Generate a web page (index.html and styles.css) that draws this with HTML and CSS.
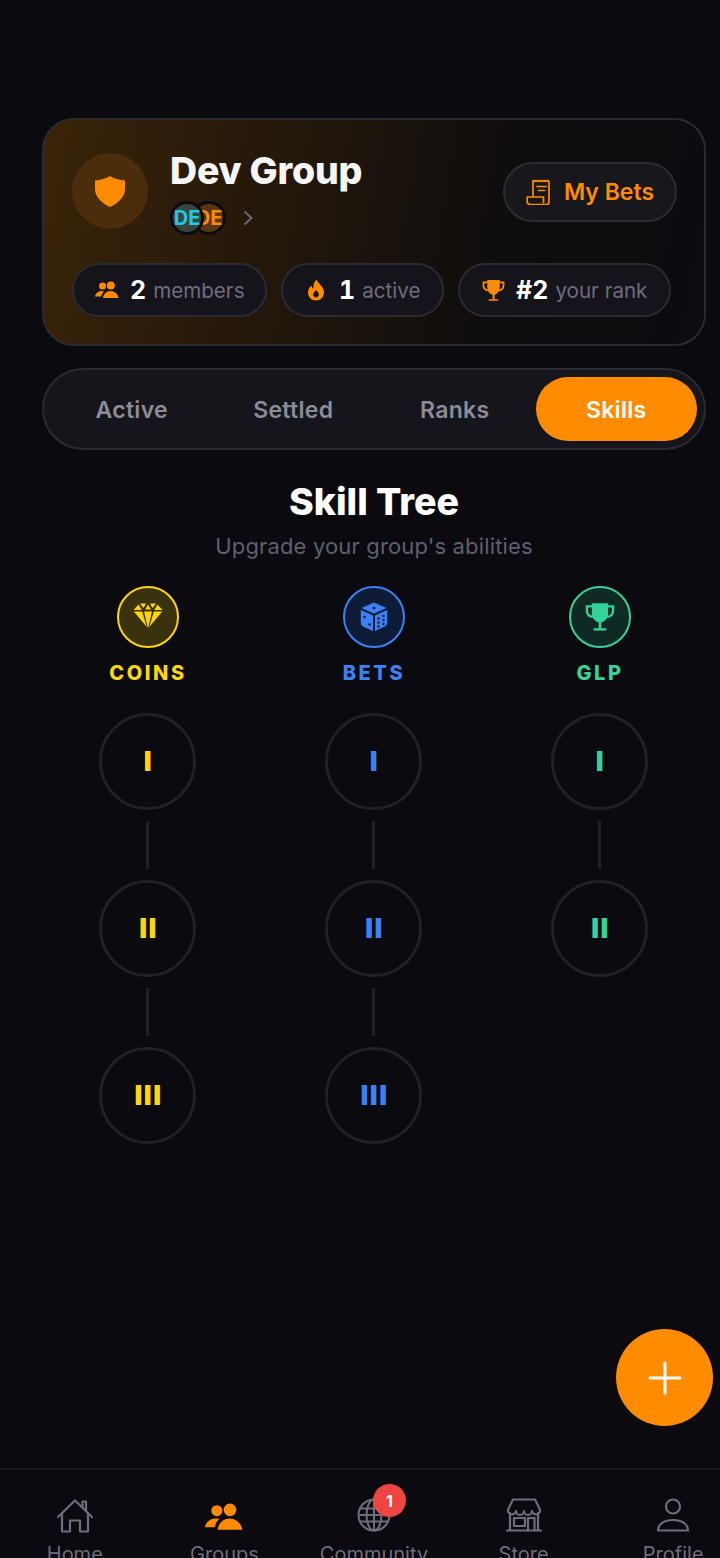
FILE: index.html
```html
<!DOCTYPE html>
<html lang="en">
<head>
  <meta charset="UTF-8" />
  <meta name="viewport" content="width=device-width, initial-scale=1.0"/>
  <title>Dev Group - Skills</title>
  <link rel="stylesheet" href="styles.css">
</head>
<body>
  <div class="screen">
    <div class="main-content">

      <div class="group-card">
        <div class="group-top">
          <div class="group-badge">
            <svg width="32" height="32" viewBox="0 0 32 32"><path d="M16 1C20 3.500 25 5 31 5.500V14C31 22 24 28 16 32 8 28 1 22 1 14V5.500C7 5 12 3.500 16 1z" fill="#ff8c00"/></svg>
          </div>
          <div class="group-info">
            <h1>Dev Group</h1>
            <div class="member-row">
              <div class="avatars">
                <span class="avatar avatar-orange">DE</span>
                <span class="avatar avatar-cyan">DE</span>
              </div>
              <svg class="chevron" width="12" height="16" viewBox="0 0 12 16"><path d="M2.500 1.500 9.500 8l-7 6.500" fill="none" stroke="#6b6478" stroke-width="2"/></svg>
            </div>
          </div>
          <button class="bets-btn">
            <svg width="28" height="26" viewBox="0 0 28 26" fill="none" stroke="#ff8c00" stroke-width="1.700" stroke-linejoin="round" stroke-linecap="round"><path d="M7 18V1.500l1.500 1 1.500-1 1.500 1 1.500-1 1.500 1 1.500-1 1.500 1 1.500-1 1.500 1 1.500-1 1 1v20.500a2.500 2.500 0 0 1-2.500 2.500H4a3 3 0 0 1-2.800-3.500V18H17.500v5.500"/><path d="M11 7.500h9M12.500 11.500h6"/></svg>
            My Bets
          </button>
        </div>
        <div class="stat-row">
          <div class="stat-pill">
            <div class="stat-icon"><svg width="24" height="18" viewBox="0 0 24 18" fill="#ff8c00"><use href="#people"/></svg></div>
            <b>2</b><span>members</span>
          </div>
          <div class="stat-pill">
            <div class="stat-icon"><svg width="18" height="22" viewBox="0 0 18 22"><path d="M9.500 0.500c.8 3.500 7.500 6.500 7.500 13 0 4.500-3.500 8-8 8s-8-3.500-8-8c0-3 1.500-5.500 3.500-7 .2 1.700.8 2.700 2 3.300C6 6.500 7 3 9.500.500z" fill="#ff8c00"/><path d="M9 11c1.600 1.600 2.800 3 2.800 4.600 0 1.600-1.200 2.900-2.800 2.900s-2.800-1.300-2.800-2.900C6.200 14 7.400 12.600 9 11z" fill="#17161c"/></svg></div>
            <b>1</b><span>active</span>
          </div>
          <div class="stat-pill">
            <div class="stat-icon"><svg class="orange" width="23" height="23" viewBox="0 0 24 24" fill="currentColor"><use href="#trophy"/></svg></div>
            <b>#2</b><span>your rank</span>
          </div>
        </div>
      </div>

      <div class="tabs">
        <div class="tab">Active</div>
        <div class="tab">Settled</div>
        <div class="tab">Ranks</div>
        <div class="tab tab-on">Skills</div>
      </div>

      <h2>Skill Tree</h2>
      <p class="subtitle">Upgrade your group's abilities</p>

      <div class="tree">
        <div class="branch coins">
          <div class="branch-icon">
            <svg width="30" height="28" viewBox="0 0 30 28" fill="currentColor"><path d="M7 .5h6L10.500 5zM17 .5h6L19.500 5zM15 1.500 18 6.500H12zM5.500 1.500 8.800 7H.5zM24.500 1.500 29.500 7h-8.300zM.8 8.500h8.300L13.800 24zM11 8.500h8l-4 17zM20.900 8.500h8.300L16.200 24z"/></svg>
          </div>
          <div class="branch-name">COINS</div>
          <div class="node">I</div>
          <div class="link"></div>
          <div class="node">II</div>
          <div class="link"></div>
          <div class="node">III</div>
        </div>
        <div class="branch bets">
          <div class="branch-icon">
            <svg width="28" height="30" viewBox="0 0 28 30"><path d="M14 .5 26.500 6 14 11.500 1.500 6z" fill="currentColor"/><path d="M.8 8 13 13.500V29L3 24.500A4 4 0 0 1 .8 21z" fill="currentColor"/><path d="M27.200 8 15 13.500V29l10-4.500a4 4 0 0 0 2.200-3.500z" fill="currentColor"/><g fill="#0f1c38"><ellipse cx="14" cy="6" rx="1.700" ry="1.200"/><circle cx="4.500" cy="15" r="1.300"/><circle cx="9.500" cy="22.500" r="1.300"/><circle cx="18.500" cy="16.500" r="1.200"/><circle cx="23.500" cy="14" r="1.200"/><circle cx="18.500" cy="20.500" r="1.200"/><circle cx="23.500" cy="18" r="1.200"/><circle cx="18.500" cy="24.500" r="1.200"/><circle cx="23.500" cy="22" r="1.200"/></g></svg>
          </div>
          <div class="branch-name">BETS</div>
          <div class="node">I</div>
          <div class="link"></div>
          <div class="node">II</div>
          <div class="link"></div>
          <div class="node">III</div>
        </div>
        <div class="branch glp">
          <div class="branch-icon">
            <svg width="30" height="30" viewBox="0 0 24 24" fill="currentColor"><use href="#trophy"/></svg>
          </div>
          <div class="branch-name">GLP</div>
          <div class="node">I</div>
          <div class="link"></div>
          <div class="node">II</div>
        </div>
      </div>
    </div>

    <button class="fab">
      <svg width="36" height="36" viewBox="0 0 36 36"><path d="M18 3v30M3 18h30" stroke="#fff" stroke-width="3" stroke-linecap="round"/></svg>
    </button>

    <nav class="tabbar">
      <div class="nav-item">
        <svg width="38" height="36" viewBox="0 0 38 36" fill="none" stroke="#6e6d7c" stroke-width="2.200" stroke-linejoin="round" stroke-linecap="round"><path d="M2 19 19 2.500 36 19"/><path d="M26.500 9.500V3.500h3.500V12.500"/><path d="M6 15.500V33.500h8V22.500h10V33.500h8V15.500"/></svg>
        <span>Home</span>
      </div>
      <div class="nav-item nav-on">
        <svg width="38" height="30" viewBox="0 0 24 18" fill="#ff8c00"><use href="#people"/></svg>
        <span>Groups</span>
      </div>
      <div class="nav-item">
        <div class="nav-icon">
          <svg width="34" height="34" viewBox="0 0 34 34" fill="none" stroke="#6e6d7c" stroke-width="2"><circle cx="17" cy="17" r="15.500"/><ellipse cx="17" cy="17" rx="7.500" ry="15.500"/><path d="M17 1.500v31M3 10.500h28M1.500 17h31M3 23.500h28"/></svg>
          <span class="badge">1</span>
        </div>
        <span>Community</span>
      </div>
      <div class="nav-item">
        <svg width="36" height="34" viewBox="0 0 36 34" fill="none" stroke="#6e6d7c" stroke-width="2.200" stroke-linejoin="round" stroke-linecap="round"><path d="M7 1.500h22l5 10a4 4 0 0 1-8 1.500 4 4 0 0 1-8 0 4 4 0 0 1-8 0 4 4 0 0 1-8-1.500z"/><path d="M4 15v17.500M32 15v17.500M1 32.500h34"/><path d="M8 20h11v8H8zM22 32.500V20h6.500v12.500"/></svg>
        <span>Store</span>
      </div>
      <div class="nav-item">
        <svg width="34" height="34" viewBox="0 0 34 34" fill="none" stroke="#6e6d7c" stroke-width="2.200" stroke-linejoin="round"><circle cx="17" cy="8.500" r="7"/><path d="M2 32.500c0-6.500 6-10.500 15-10.500s15 4 15 10.500z"/></svg>
        <span>Profile</span>
      </div>
    </nav>
  </div>

  <svg class="defs" width="0" height="0">
    <symbol id="people" viewBox="0 0 24 18">
      <circle cx="7.500" cy="5" r="3.500"/><circle cx="15.800" cy="4.500" r="4"/>
      <path d="M0 15.500c.5-3 3-5.500 6.800-5.500.8 0 1.500.1 2.200.3-1.400 1.200-2.400 3-2.700 5.200z"/>
      <path d="M8 17c.4-4 3.500-7 7.500-7s7.500 3 8 7z"/>
    </symbol>
    <symbol id="trophy" viewBox="0 0 24 24">
      <path d="M5.500 1h13v7.500c0 4.500-2.800 7.500-6.500 8-3.700-.5-6.500-3.500-6.500-8z"/>
      <path d="M6 3.500H1.500v3c0 3 2 5 4.800 5.500M18 3.500h4.500v3c0 3-2 5-4.800 5.500" fill="none" stroke="currentColor" stroke-width="1.800"/>
      <path d="M11 15h2v6h-2zM7 21h10v1.800H7z"/>
    </symbol>
  </svg>
</body>
</html>
```

FILE: styles.css
```css
* {
  box-sizing: border-box;
}
html, body {
  margin: 0;
  height: 1558px;
  overflow: hidden;
  background-color: #0a0a0f;
}
body {
  font-family: Inter, "Noto Sans", sans-serif;
  color: #fff;
}
.screen {
  position: relative;
  width: 748px;
  height: 1558px;
  display: flex;
  flex-direction: column;
  overflow: hidden;
}
.main-content {
  flex: 1;
  padding: 118px 42px 0;
}
.defs {
  position: absolute;
}
.orange {
  color: #ff8c00;
}

/* group header */
.group-card {
  height: 228px;
  border: 2px solid #2a2a33;
  border-radius: 32px;
  padding: 33px 28px 0;
  background: linear-gradient(100deg, #3a2308 0%, #20160b 40%, #0e0c0d 70%, #0c0c11 100%);
}
.group-top {
  display: flex;
  align-items: flex-start;
}
.group-badge {
  width: 76px;
  height: 76px;
  border-radius: 50%;
  background-color: #4b2d0c;
  display: flex;
  align-items: center;
  justify-content: center;
}
.group-info {
  flex: 1;
  margin-left: 22px;
}
h1 {
  margin: -3px 0 0;
  font-size: 37.500px;
  line-height: 42px;
  font-weight: 800;
  letter-spacing: -0.2px;
  color: #f6f6f6;
}
.member-row {
  display: flex;
  align-items: center;
  margin-top: 9px;
}
.avatars {
  display: flex;
  flex-direction: row-reverse;
  width: 56px;
}
.avatar {
  width: 34px;
  height: 34px;
  border: 3px solid #0c0c10;
  border-radius: 50%;
  display: flex;
  align-items: center;
  justify-content: center;
  font-size: 20px;
  font-weight: 700;
}
.avatar-cyan {
  background-color: #39463f;
  color: #22c8e6;
  position: relative;
  z-index: 1;
}
.avatar-orange {
  background-color: #5a3710;
  color: #ff8c00;
  margin-left: -12px;
}
.chevron {
  margin-left: 16px;
}
.bets-btn {
  width: 174px;
  height: 60px;
  margin: 9px -1px 0 0;
  border: 2px solid #2c2c34;
  border-radius: 30px;
  background-color: #17171c;
  color: #ff8c00;
  font-family: inherit;
  font-size: 23px;
  font-weight: 600;
  display: flex;
  align-items: center;
  justify-content: center;
  gap: 10px;
  padding: 0;
}
.stat-row {
  display: grid;
  grid-template-columns: 195px 163px 213px;
  gap: 14px;
  margin-top: 28px;
}
.stat-pill {
  height: 54px;
  border: 2px solid #2a2a33;
  border-radius: 27px;
  background-color: #14141a;
  display: flex;
  align-items: center;
  padding-left: 20px;
  font-size: 20.600px;
}
.stat-icon {
  width: 26px;
  display: flex;
  justify-content: center;
}
.stat-pill b {
  margin-left: 10px;
  font-size: 25px;
  font-weight: 700;
  font-variant-numeric: tabular-nums;
  color: #fff;
}
.stat-pill span {
  margin-left: 7px;
  color: #6e6d80;
}

/* tabs */
.tabs {
  height: 82px;
  margin-top: 22px;
  border: 2px solid #2a2a33;
  border-radius: 41px;
  background-color: #15151b;
  padding: 7px;
  display: flex;
}
.tab {
  flex: 1;
  display: flex;
  align-items: center;
  justify-content: center;
  border-radius: 32px;
  padding-top: 1px;
  font-size: 23px;
  font-weight: 600;
  letter-spacing: 0.3px;
  color: #8c8c98;
}
.tab-on {
  background-color: #ff8c00;
  color: #fff;
}

h2 {
  margin: 29px 0 0;
  text-align: center;
  font-size: 37.500px;
  line-height: 46px;
  font-weight: 800;
  color: #fff;
}
.subtitle {
  margin: 6px 0 0;
  text-align: center;
  font-size: 22px;
  line-height: 30px;
  letter-spacing: 0.15px;
  color: #5f5f6e;
}

/* skill tree */
.tree {
  display: grid;
  grid-template-columns: repeat(3, 226px);
  justify-content: center;
  align-items: start;
  margin: 25px -20px 0;
}
.branch {
  display: flex;
  flex-direction: column;
  align-items: center;
}
.coins {
  color: #ffd60a;
}
.coins .branch-icon {
  background-color: #3a320c;
}
.bets {
  color: #3b82f6;
}
.bets .branch-icon {
  background-color: #0f1c38;
}
.glp {
  color: #34d399;
}
.glp .branch-icon {
  background-color: #0f2a24;
}
.branch-icon {
  width: 62px;
  height: 62px;
  border: 2px solid currentColor;
  border-radius: 50%;
  display: flex;
  align-items: center;
  justify-content: center;
}
.branch-name {
  margin-top: 13px;
  margin-bottom: 28px;
  font-size: 20px;
  line-height: 24px;
  font-weight: 800;
  letter-spacing: 2.600px;
}
.node {
  width: 97px;
  height: 97px;
  margin-left: -1px;
  border: 3px solid #202026;
  border-radius: 50%;
  display: flex;
  align-items: center;
  justify-content: center;
  padding-left: 2px;
  font-size: 27px;
  font-weight: 900;
  letter-spacing: 1.500px;
}
.link {
  width: 3px;
  height: 48px;
  margin: 11px 0 11px -1px;
  background-color: #202026;
}

/* fab */
.fab {
  position: absolute;
  left: 616px;
  top: 1329px;
  width: 97px;
  height: 97px;
  border: none;
  border-radius: 50%;
  background-color: #ff8c00;
  display: flex;
  align-items: center;
  justify-content: center;
  padding: 0;
}

/* bottom nav */
.tabbar {
  height: 90px;
  border-top: 2px solid #17171d;
  display: grid;
  grid-template-columns: repeat(5, 1fr);
  padding-top: 28px;
}
.nav-item {
  display: flex;
  flex-direction: column;
  align-items: center;
  font-size: 20px;
  color: #6e6d7c;
}
.nav-item > span {
  position: absolute;
  top: 1542px;
  line-height: 24px;
}
.nav-on svg {
  margin-top: 4px;
}
.nav-icon {
  position: relative;
}
.badge {
  position: absolute;
  left: 16px;
  top: -14px;
  width: 33px;
  height: 33px;
  border-radius: 50%;
  background-color: #ef4444;
  color: #fff;
  font-size: 16px;
  font-weight: 700;
  display: flex;
  align-items: center;
  justify-content: center;
}
```
